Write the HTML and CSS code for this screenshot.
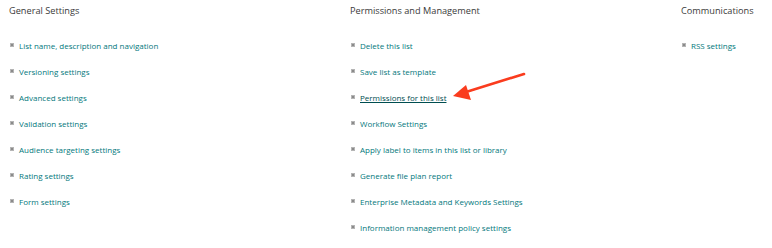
FILE: index.html
```html
<!DOCTYPE html>
<html lang="en">

<head>
    <meta charset="UTF-8">
    <title>List Settings</title>
    <link rel="stylesheet" href="styles.css">
</head>

<body>
    <div class="settings">
        <div class="group">
            <h3>General Settings</h3>
            <ul>
                <li><a href="#">List name, description and navigation</a></li>
                <li><a href="#">Versioning settings</a></li>
                <li><a href="#">Advanced settings</a></li>
                <li><a href="#">Validation settings</a></li>
                <li><a href="#">Audience targeting settings</a></li>
                <li><a href="#">Rating settings</a></li>
                <li><a href="#">Form settings</a></li>
            </ul>
        </div>
        <div class="group">
            <h3>Permissions and Management</h3>
            <ul>
                <li><a href="#">Delete this list</a></li>
                <li><a href="#">Save list as template</a></li>
                <li><a href="#" class="active">Permissions for this list</a></li>
                <li><a href="#">Workflow Settings</a></li>
                <li><a href="#">Apply label to items in this list or library</a></li>
                <li><a href="#">Generate file plan report</a></li>
                <li><a href="#">Enterprise Metadata and Keywords Settings</a></li>
                <li><a href="#">Information management policy settings</a></li>
            </ul>
        </div>
        <div class="group">
            <h3>Communications</h3>
            <ul>
                <li><a href="#">RSS settings</a></li>
            </ul>
        </div>
    </div>

    <!-- callout arrow -->
    <svg class="arrow" width="772" height="248" viewBox="0 0 772 248">
        <line x1="524" y1="74" x2="466" y2="92" stroke="#fa3c1e" stroke-width="2.6" stroke-linecap="round" />
        <polygon points="453,96 466,85 471,100" fill="#fa3c1e" />
    </svg>
</body>

</html>
```

FILE: styles.css
```css
body {
    margin: 0;
    background-color: #fff;
    font-family: 'Open Sans', sans-serif;
    color: #333;
}

.settings {
    display: grid;
    grid-template-columns: 341px 331px auto;
    padding: 4px 0 0 9px;
}

h3 {
    font-size: 9.2px;
    font-weight: normal;
    margin: 0 0 14px 0;
    line-height: 14px;
    color: #3a3a3a;
}

ul {
    list-style: none;
    margin: 0;
    padding: 0;
}

li {
    display: flex;
    align-items: center;
    height: 26px;
    font-size: 8px;
}

li::before {
    content: "";
    width: 2px;
    height: 2px;
    background-color: #8a8a8a;
    border: 0.5px solid #b5b5b5;
    margin: 0 5px 1px 1px;
}

a {
    color: #03787c;
    text-decoration: none;
}

a.active {
    color: #004e50;
    text-decoration: underline;
}

/* overlay for the red arrow */
.arrow {
    position: absolute;
    left: 0;
    top: 0;
    pointer-events: none;
}
```
